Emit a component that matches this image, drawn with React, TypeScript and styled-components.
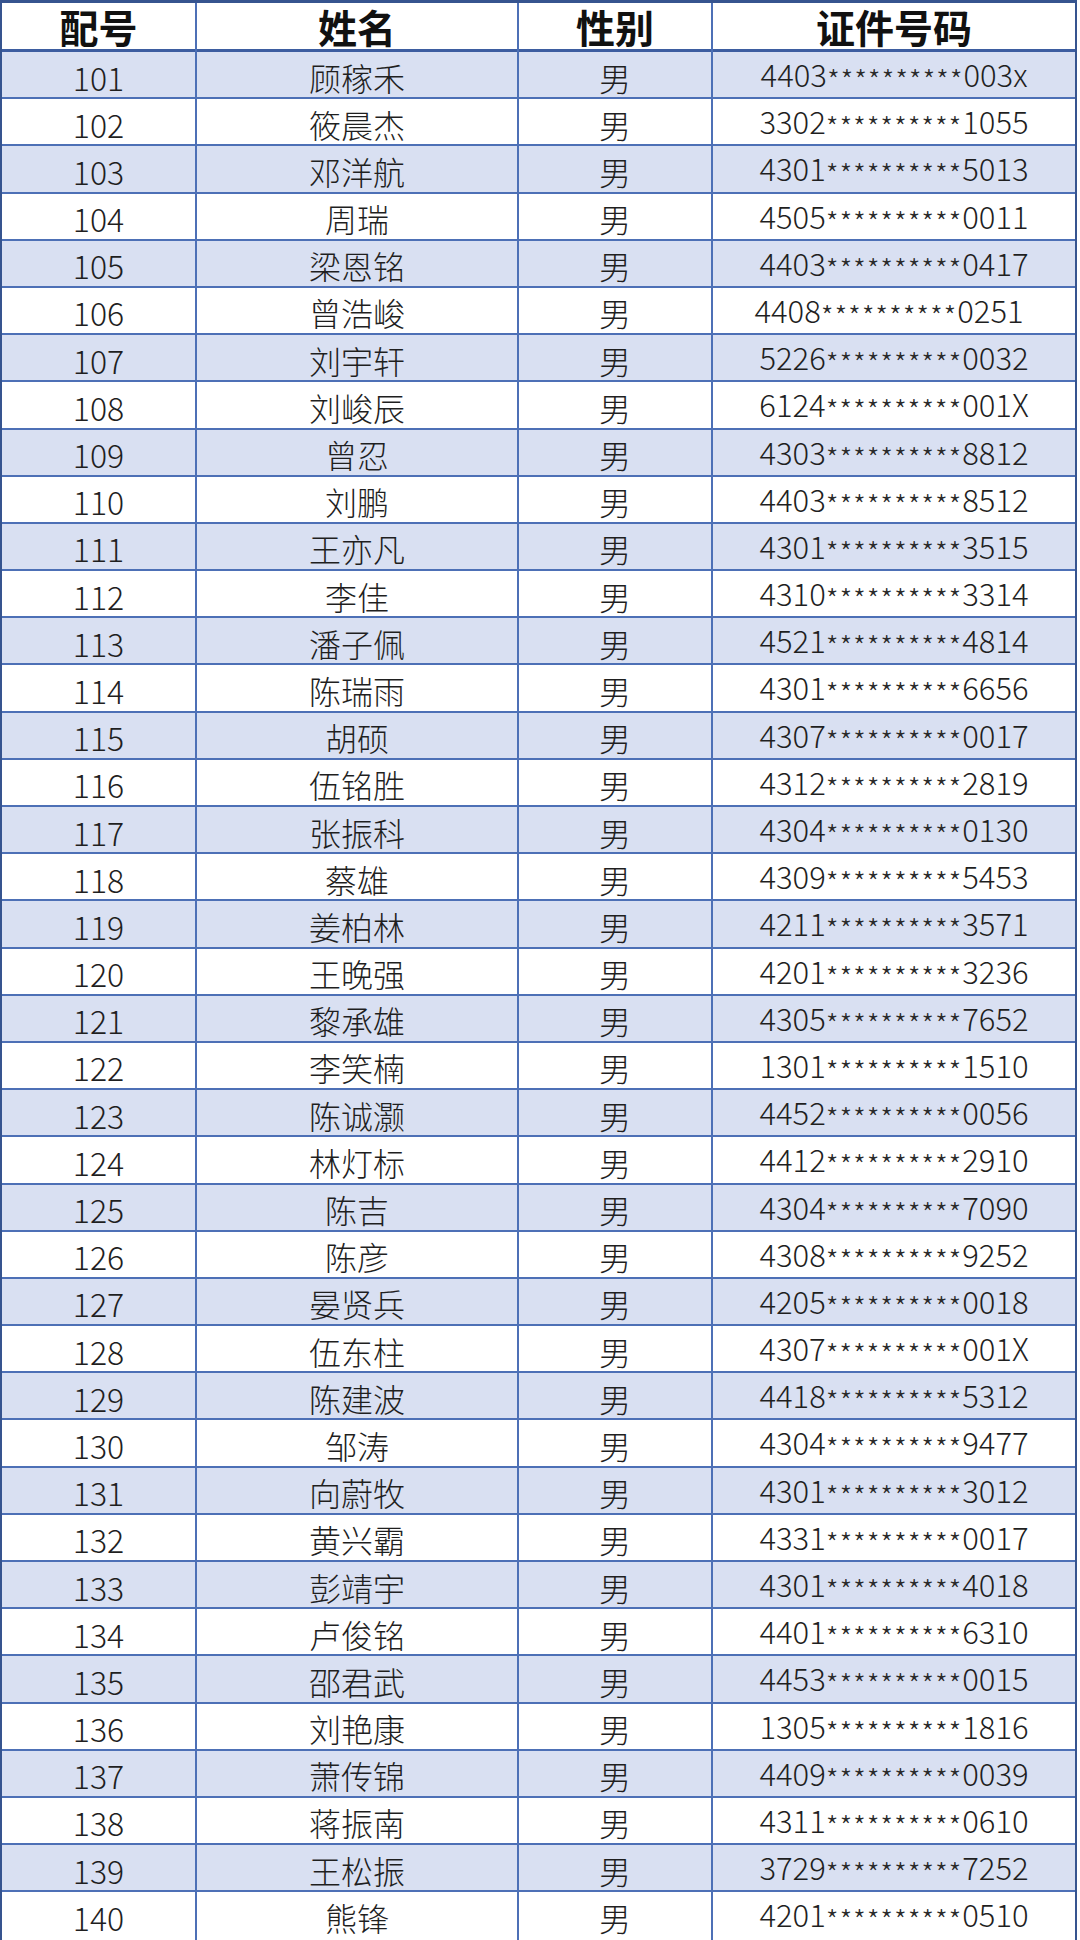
import React from 'react';
import styled, { createGlobalStyle } from 'styled-components';

const GlobalStyle = createGlobalStyle`
  html, body {
    margin: 0;
    padding: 0;
    background: #ffffff;
  }
  * {
    box-sizing: border-box;
  }
`;

const COLUMNS = '193px 322px 194px 1fr';
const GRID_LINE = '#4d70b6';

const Sheet = styled.div`
  width: 1077px;
  border: 2px solid #36548f;
  border-top-width: 3px;
  font-family: 'Noto Sans CJK SC', 'Noto Sans', sans-serif;
  color: #1f1f1f;
  background: #ffffff;
`;

const HeaderRow = styled.div`
  display: grid;
  grid-template-columns: ${COLUMNS};
  height: 49px;
  border-bottom: 3px solid #3d5da0;
  background: #ffffff;
`;

const Row = styled.div<{ $shaded: boolean; $last: boolean }>`
  display: grid;
  grid-template-columns: ${COLUMNS};
  height: 47.2px;
  border-bottom: ${(p) => (p.$last ? 'none' : `2px solid ${GRID_LINE}`)};
  background: ${(p) => (p.$shaded ? '#d9e0f2' : '#ffffff')};
`;

const Cell = styled.div<{ $first?: boolean; $shift?: number }>`
  display: flex;
  align-items: center;
  justify-content: center;
  border-left: ${(p) => (p.$first ? 'none' : `2px solid ${GRID_LINE}`)};
  padding-right: ${(p) => p.$shift || 0}px;
  padding-bottom: 3px;
  white-space: nowrap;
  min-width: 0;
`;

const HeadText = styled.span`
  font-size: 39px;
  font-weight: 700;
  color: #111111;
  line-height: 46px;
`;

const NumText = styled.span`
  font-size: 32px;
  font-weight: 300;
  line-height: 44px;
`;

const NameText = styled.span`
  font-size: 32px;
  font-weight: 300;
  line-height: 44px;
`;

const IdText = styled.span`
  font-size: 31px;
  font-weight: 300;
  line-height: 44px;
`;

const Stars = styled.span`
  font-size: 29px;
  letter-spacing: 0.8px;
  vertical-align: -5px;
  color: #2a2a2a;
`;

type Person = { no: number; name: string; head: string; tail: string; shift?: number };

const people: Person[] = [
  { no: 101, name: '顾稼禾', head: '4403', tail: '003x' },
  { no: 102, name: '筱晨杰', head: '3302', tail: '1055' },
  { no: 103, name: '邓洋航', head: '4301', tail: '5013' },
  { no: 104, name: '周瑞', head: '4505', tail: '0011' },
  { no: 105, name: '梁恩铭', head: '4403', tail: '0417' },
  { no: 106, name: '曾浩峻', head: '4408', tail: '0251', shift: 10 },
  { no: 107, name: '刘宇轩', head: '5226', tail: '0032' },
  { no: 108, name: '刘峻辰', head: '6124', tail: '001X' },
  { no: 109, name: '曾忍', head: '4303', tail: '8812' },
  { no: 110, name: '刘鹏', head: '4403', tail: '8512' },
  { no: 111, name: '王亦凡', head: '4301', tail: '3515' },
  { no: 112, name: '李佳', head: '4310', tail: '3314' },
  { no: 113, name: '潘子佩', head: '4521', tail: '4814' },
  { no: 114, name: '陈瑞雨', head: '4301', tail: '6656' },
  { no: 115, name: '胡硕', head: '4307', tail: '0017' },
  { no: 116, name: '伍铭胜', head: '4312', tail: '2819' },
  { no: 117, name: '张振科', head: '4304', tail: '0130' },
  { no: 118, name: '蔡雄', head: '4309', tail: '5453' },
  { no: 119, name: '姜柏林', head: '4211', tail: '3571' },
  { no: 120, name: '王晚强', head: '4201', tail: '3236' },
  { no: 121, name: '黎承雄', head: '4305', tail: '7652' },
  { no: 122, name: '李笑楠', head: '1301', tail: '1510' },
  { no: 123, name: '陈诚灏', head: '4452', tail: '0056' },
  { no: 124, name: '林灯标', head: '4412', tail: '2910' },
  { no: 125, name: '陈吉', head: '4304', tail: '7090' },
  { no: 126, name: '陈彦', head: '4308', tail: '9252' },
  { no: 127, name: '晏贤兵', head: '4205', tail: '0018' },
  { no: 128, name: '伍东柱', head: '4307', tail: '001X' },
  { no: 129, name: '陈建波', head: '4418', tail: '5312' },
  { no: 130, name: '邹涛', head: '4304', tail: '9477' },
  { no: 131, name: '向蔚牧', head: '4301', tail: '3012' },
  { no: 132, name: '黄兴霸', head: '4331', tail: '0017' },
  { no: 133, name: '彭靖宇', head: '4301', tail: '4018' },
  { no: 134, name: '卢俊铭', head: '4401', tail: '6310' },
  { no: 135, name: '邵君武', head: '4453', tail: '0015' },
  { no: 136, name: '刘艳康', head: '1305', tail: '1816' },
  { no: 137, name: '萧传锦', head: '4409', tail: '0039' },
  { no: 138, name: '蒋振南', head: '4311', tail: '0610' },
  { no: 139, name: '王松振', head: '3729', tail: '7252' },
  { no: 140, name: '熊锋', head: '4201', tail: '0510' }
];

const headers = ['配号', '姓名', '性别', '证件号码'];

const App: React.FC = () => (
  <>
    <GlobalStyle />
    <Sheet>
      <HeaderRow>
        {headers.map((h, i) => (
          <Cell key={h} $first={i === 0}>
            <HeadText>{h}</HeadText>
          </Cell>
        ))}
      </HeaderRow>
      {people.map((p, i) => (
        <Row key={p.no} $shaded={i % 2 === 0} $last={i === people.length - 1}>
          <Cell $first>
            <NumText>{p.no}</NumText>
          </Cell>
          <Cell>
            <NameText>{p.name}</NameText>
          </Cell>
          <Cell>
            <NameText>男</NameText>
          </Cell>
          <Cell $shift={p.shift}>
            <IdText>
              {p.head}
              <Stars>**********</Stars>
              {p.tail}
            </IdText>
          </Cell>
        </Row>
      ))}
    </Sheet>
  </>
);

export default App;
